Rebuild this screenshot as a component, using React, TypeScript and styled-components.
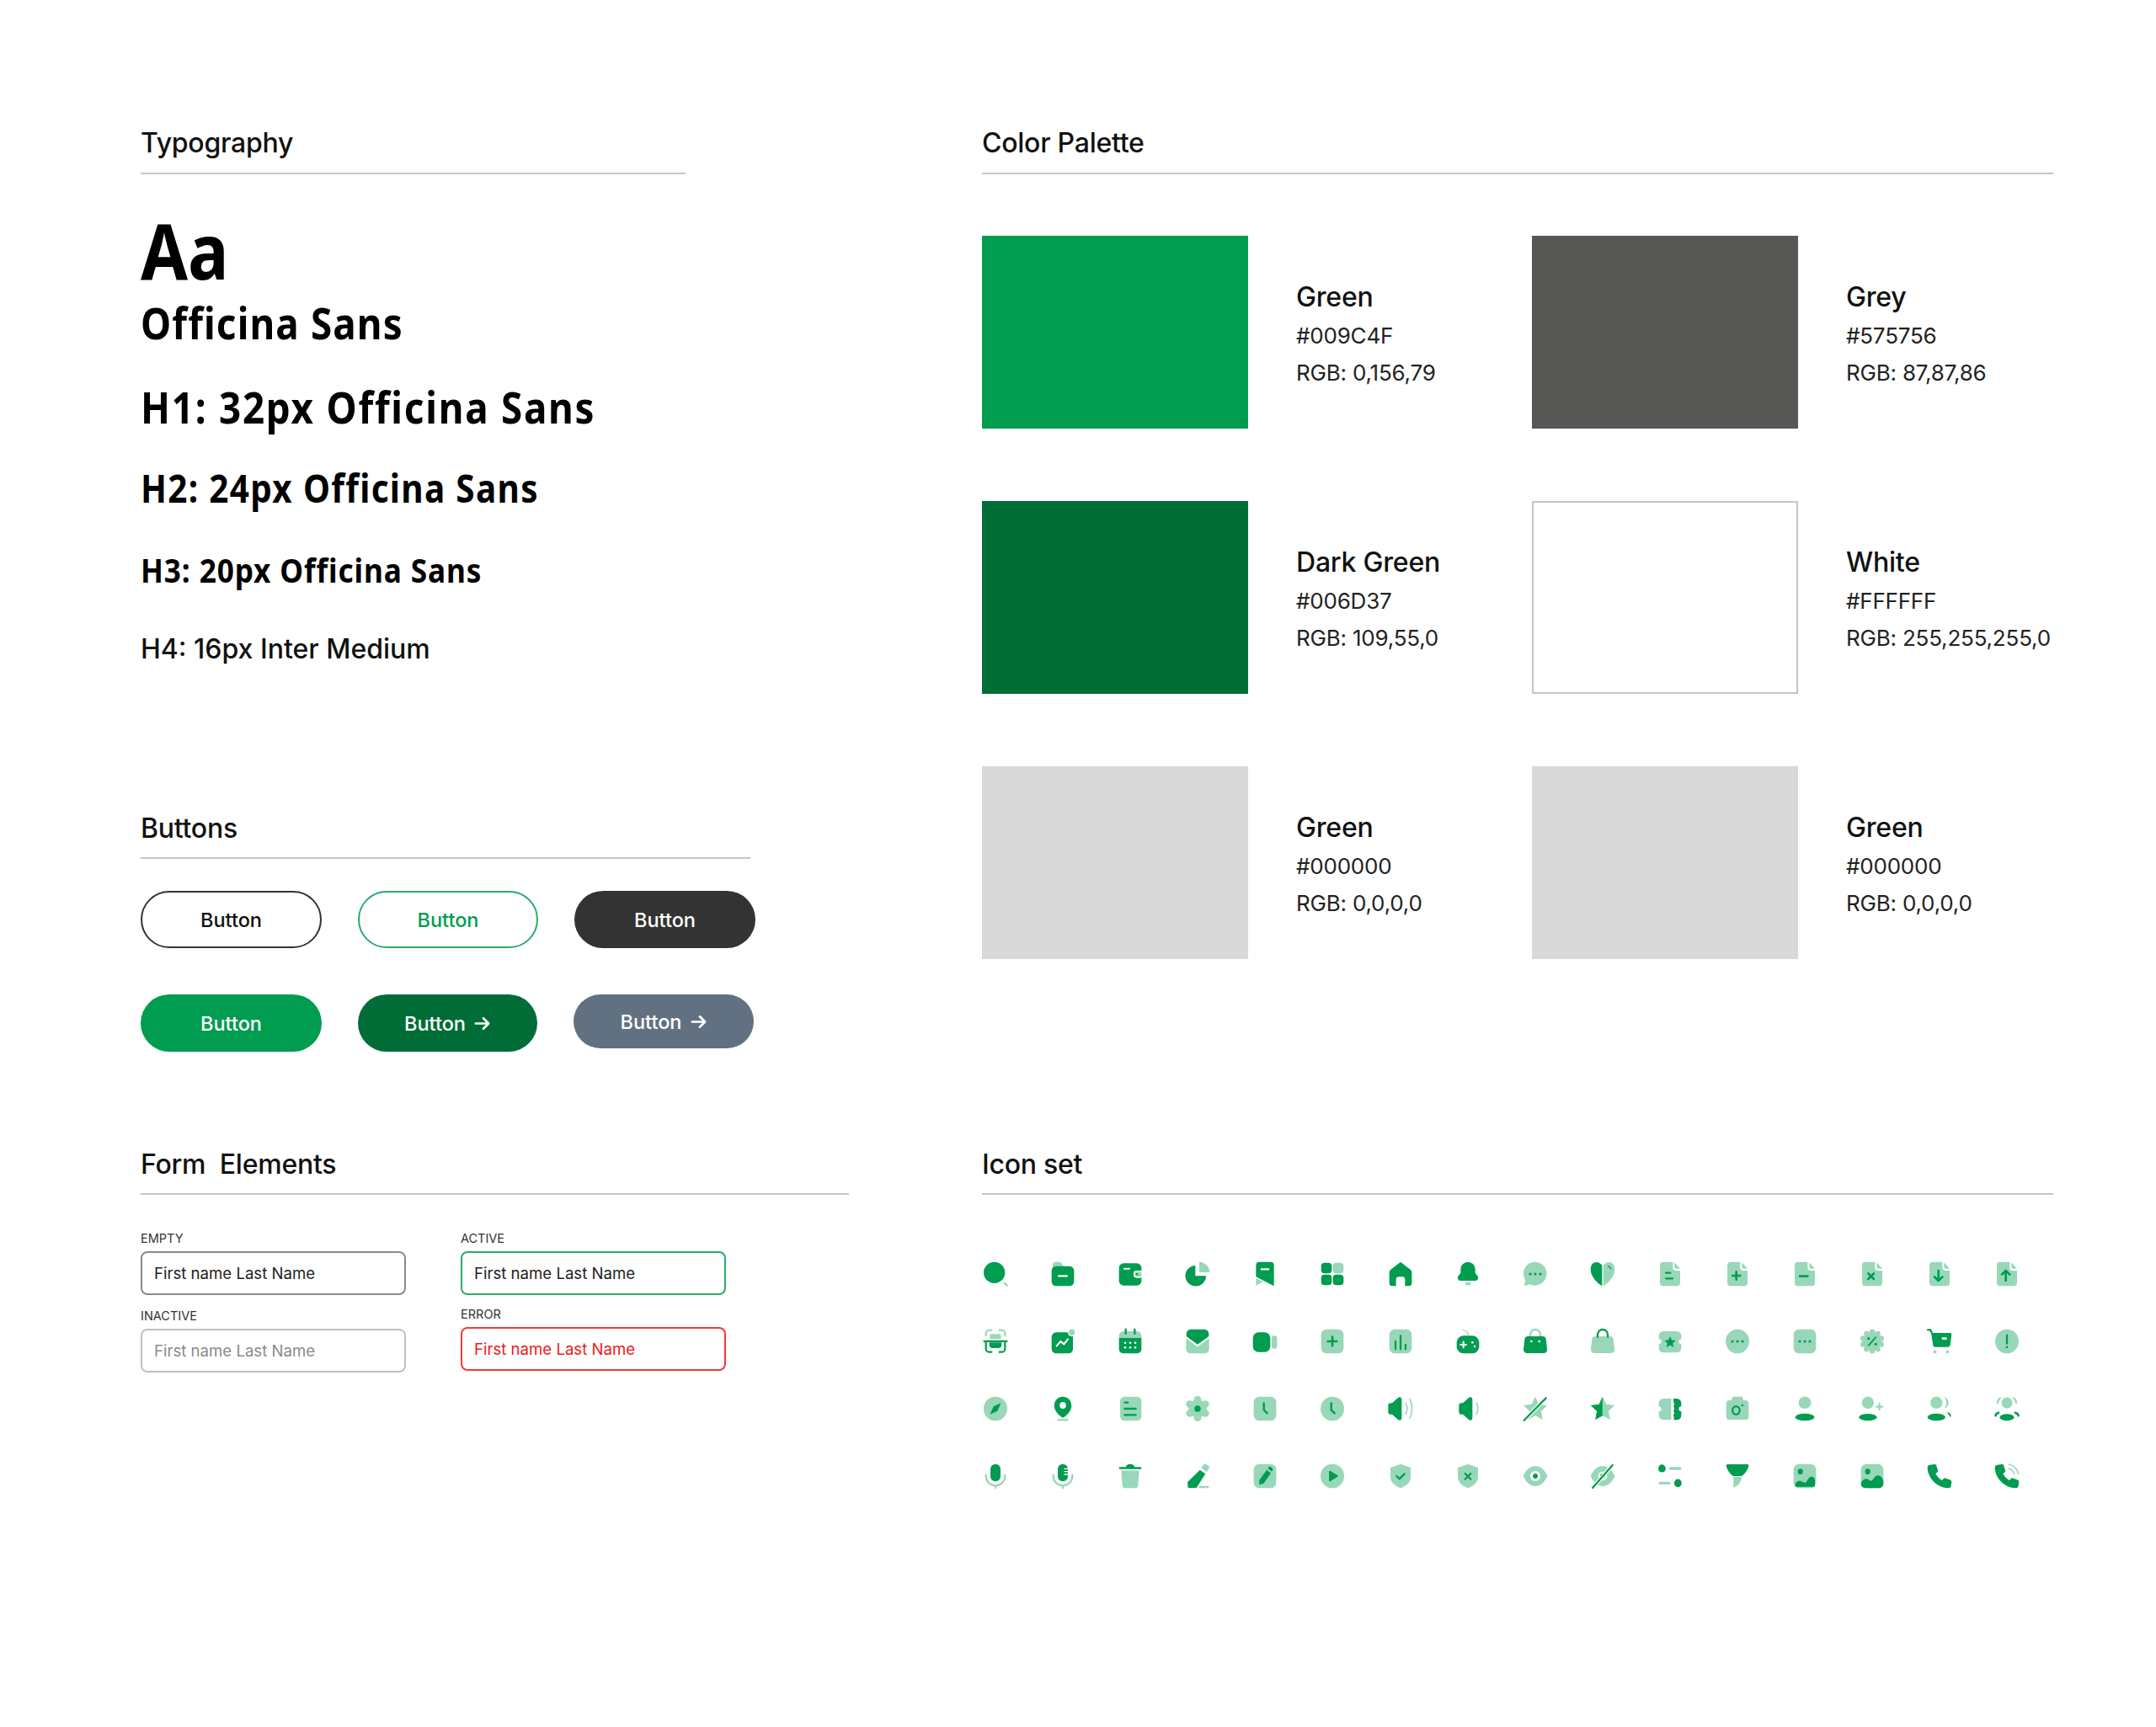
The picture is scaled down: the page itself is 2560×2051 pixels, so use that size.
import React from "react";
import styled, { createGlobalStyle } from "styled-components";

const GREEN = "#009C4F";

const Global = createGlobalStyle`
  html, body { margin: 0; padding: 0; background: #fff; }
  body { font-family: Inter, "Liberation Sans", sans-serif; color: #111; }
`;

const Page = styled.main`
  width: 2560px;
  min-height: 2051px;
  box-sizing: border-box;
  padding: 150px 122px 0 167px;
  display: grid;
  grid-template-columns: 999px 1272px;
  align-content: start;
  row-gap: 114px;
`;
const Column = styled.div`
  display: flex;
  flex-direction: column;
`;
const Section = styled.section<{ $width?: number; $top?: number }>`
  width: ${(p) => (p.$width ? `${p.$width}px` : "auto")};
  margin-top: ${(p) => p.$top ?? 0}px;
`;
const SectionTitle = styled.h2<{ $pad?: number }>`
  margin: 0;
  font-size: 32px;
  line-height: 40px;
  font-weight: 500;
  letter-spacing: -0.25px;
  color: #111;
  padding-bottom: ${(p) => p.$pad ?? 14}px;
  border-bottom: 2px solid #c6c6c6;
  white-space: pre;
`;

/* Typography */
const Specimen = styled.div<{ $size: number; $line: number; $top: number; $spacing: number }>`
  font-family: "Noto Sans", "Liberation Sans", sans-serif;
  font-weight: 700;
  font-size: ${(p) => p.$size}px;
  line-height: ${(p) => p.$line}px;
  letter-spacing: ${(p) => p.$spacing}px;
  margin-top: ${(p) => p.$top}px;
  color: #000;
  white-space: nowrap;
  transform: scaleX(0.88);
  transform-origin: left center;
`;
const InterLine = styled.div`
  font-size: 32px;
  line-height: 40px;
  font-weight: 500;
  margin-top: 54px;
  color: #111;
`;

/* Buttons */
const ButtonRows = styled.div`
  display: flex;
  flex-direction: column;
  gap: 55px;
  margin-top: 38px;
`;
const ButtonRow = styled.div`
  display: flex;
  align-items: flex-start;
  gap: 43px;
`;
const Pill = styled.button<{ $bg: string; $fg: string; $border?: string; $w?: number; $h?: number }>`
  flex: none;
  width: ${(p) => p.$w ?? 215}px;
  height: ${(p) => p.$h ?? 68}px;
  box-sizing: border-box;
  border-radius: 40px;
  background: ${(p) => p.$bg};
  color: ${(p) => p.$fg};
  border: ${(p) => (p.$border ? `2px solid ${p.$border}` : "none")};
  font-family: Inter, sans-serif;
  font-size: 23.5px;
  font-weight: 500;
  display: inline-flex;
  align-items: center;
  justify-content: center;
  gap: 9px;
  padding: 0;
`;

/* Form */
const FormGrid = styled.div`
  display: grid;
  grid-template-columns: 315px 315px;
  column-gap: 65px;
  margin-top: 42px;
`;
const FormColumn = styled.div<{ $gap: number }>`
  display: flex;
  flex-direction: column;
  gap: ${(p) => p.$gap}px;
`;
const FieldWrap = styled.label`
  display: flex;
  flex-direction: column;
  gap: 5px;
`;
const FieldLabel = styled.span`
  font-size: 14.5px;
  line-height: 20px;
  color: #333;
`;
const Field = styled.div<{ $border: string; $color: string }>`
  height: 52px;
  box-sizing: border-box;
  border: 2px solid ${(p) => p.$border};
  border-radius: 8px;
  padding: 0 14px;
  display: flex;
  align-items: center;
  font-size: 18.6px;
  color: ${(p) => p.$color};
`;

/* Palette */
const Palette = styled.div`
  display: grid;
  grid-template-columns: 653px 619px;
  row-gap: 86px;
  margin-top: 73px;
`;
const ColorCard = styled.div`
  display: flex;
  align-items: center;
  gap: 57px;
`;
const Swatch = styled.div<{ $bg: string; $outlined?: boolean }>`
  width: 316px;
  height: 229px;
  box-sizing: border-box;
  flex: none;
  background: ${(p) => p.$bg};
  border: ${(p) => (p.$outlined ? "2px solid #c6c6c6" : "none")};
`;
const ColorText = styled.div`
  display: flex;
  flex-direction: column;
  padding-top: 5px;
  white-space: nowrap;
  letter-spacing: -0.2px;
`;
const ColorName = styled.div`
  font-size: 32px;
  line-height: 48px;
  font-weight: 500;
  color: #111;
`;
const ColorValue = styled.div`
  font-size: 26px;
  line-height: 44px;
  color: #222;
`;

/* Icons */
const IconGrid = styled.div`
  display: grid;
  grid-template-columns: repeat(16, 32px);
  grid-auto-rows: 32px;
  column-gap: 48.1px;
  row-gap: 48px;
  margin-top: 78px;
`;
const IconSvg = styled.svg`
  width: 32px;
  height: 32px;
  display: block;
  .d { fill: ${GREEN}; }
  .l { fill: ${GREEN}; fill-opacity: 0.4; }
  .w { fill: #fff; }
  .ds { fill: none; stroke: ${GREEN}; stroke-width: 1.7; stroke-linecap: round; stroke-linejoin: round; }
  .ls { fill: none; stroke: ${GREEN}; stroke-opacity: 0.4; stroke-width: 1.7; stroke-linecap: round; stroke-linejoin: round; }
  .ws { fill: none; stroke: #fff; stroke-width: 1.6; stroke-linecap: round; stroke-linejoin: round; }
  .halo { fill: none; stroke: #fff; stroke-width: 3.4; stroke-linecap: round; }
`;

const FILE = "M6 1.25H14.5V6a3 3 0 0 0 3 3H21V19.75a3 3 0 0 1-3 3H6a3 3 0 0 1-3-3V4.25a3 3 0 0 1 3-3Z";
const FOLD = "M16 1.6L21 7.4H18a2 2 0 0 1-2-2Z";
const TICKET = "M6 3h12a4 4 0 0 1 4 4v3a2.2 2.2 0 0 0 0 4.4V18a4 4 0 0 1-4 4H6a4 4 0 0 1-4-4v-3.6A2.2 2.2 0 0 0 2 10V7a4 4 0 0 1 4-4Z";
const STAR = "M12 1.25l3.2 6.8 7.4 1-5.4 5.2 1.4 7.5-6.6-3.6-6.6 3.6 1.4-7.5-5.4-5.2 7.4-1Z";
const BAG = "M5.5 7.5h13a3 3 0 0 1 3 2.7l1 9a3 3 0 0 1-3 3.3H4.5a3 3 0 0 1-3-3.3l1-9a3 3 0 0 1 3-2.7Z";
const SHIELD = "M12 1.25L21 4.5V13c0 4.5-4 8-9 9.75C7 21 3 17.5 3 13V4.5Z";
const EYE = "M12 3C17 3 20.5 7 22.75 12C20.5 17 17 21 12 21C7 21 3.5 17 1.25 12C3.5 7 7 3 12 3Z";
const PHONE = "M3.5 2L7.5 1.5a1.5 1.5 0 0 1 1.6 1L10.5 7a1.5 1.5 0 0 1-.5 1.6L8.5 10C9.8 12.5 11.8 14.5 14.2 15.8L15.7 14.2a1.5 1.5 0 0 1 1.6-.4L21.8 15.5a1.5 1.5 0 0 1 .9 1.5L22.3 20.5a2.5 2.5 0 0 1-2.5 2.2C10 22.5 1.5 14 1.25 4.5A2.5 2.5 0 0 1 3.5 2Z";
const SPEAKER = "M10 2c2-1 3 .5 3 2V20c0 1.5-1 3-3 2L4.5 17H3a2 2 0 0 1-2-2V9a2 2 0 0 1 2-2h1.5Z";

const Bumps = ({ n, r, b, c }: { n: number; r: number; b: number; c: string }) => (
  <>
    {Array.from({ length: n }, (_, i) => {
      const a = (i * 2 * Math.PI) / n;
      return <circle key={i} className={c} cx={12 + r * Math.sin(a)} cy={12 - r * Math.cos(a)} r={b} />;
    })}
  </>
);
const Dots = () => (
  <>
    <circle className="d" cx="7.5" cy="12" r="1.2" />
    <circle className="d" cx="12" cy="12" r="1.2" />
    <circle className="d" cx="16.5" cy="12" r="1.2" />
  </>
);
const FileIcon = ({ children }: { children: React.ReactNode }) => (
  <>
    <path className="l" d={FILE} />
    <path className="l" d={FOLD} />
    {children}
  </>
);
const SquareL = () => <rect className="l" x="2" y="1.25" width="20" height="21.5" rx="5" />;
const CircleL = () => <ellipse className="l" cx="12" cy="12" rx="10.5" ry="10.75" />;

const ICONS: React.ReactNode[] = [
  /* row 1 */
  <><circle className="d" cx="11" cy="10.8" r="9.5" /><path className="ls" d="M20 20l2.2 2.2" /></>,
  <><path className="l" d="M3 8V4a2.7 2.7 0 0 1 2.7-2.7h3c1 0 1.7.5 2.2 1.3L13 6Z" /><rect className="d" x="2" y="5" width="20" height="17.75" rx="4" /><rect className="w" x="7.5" y="13" width="9" height="1.7" rx=".8" /></>,
  <><rect className="d" x="2" y="2.5" width="20" height="19.75" rx="4" /><rect className="w" x="6" y="6.5" width="6" height="1.6" rx=".8" /><rect className="w" x="15" y="9" width="8" height="6.5" rx="2.5" /><rect className="l" x="16" y="10" width="6" height="4.5" rx="1.8" /><circle className="d" cx="18" cy="12.2" r="1" /></>,
  <><path className="d" d="M10 4.5V13.75H19.5A9.2 9.2 0 1 1 10 4.5Z" /><path className="l" d="M13.5 1.25A9.5 9.5 0 0 1 22.75 10.5H13.5Z" /></>,
  <><path className="d" d="M7 1.25h10a3 3 0 0 1 3 3V22.75L4 14.5V4.25a3 3 0 0 1 3-3Z" /><path className="l" d="M4 15.7L10.5 18.8L4 22.5Z" /><rect className="w" x="8" y="7" width="8" height="1.6" rx=".8" /></>,
  <><rect className="d" x="2" y="2" width="9.5" height="9.5" rx="3" /><rect className="l" x="12.5" y="2" width="9.5" height="9.5" rx="3" /><rect className="d" x="2" y="12.5" width="9.5" height="9.5" rx="3" /><rect className="d" x="12.5" y="12.5" width="9.5" height="9.5" rx="3" /></>,
  <path className="d" d="M12 1.25L20.7 8a3.5 3.5 0 0 1 1.3 2.7V20a2.7 2.7 0 0 1-2.7 2.7H16V17a2.5 2.5 0 0 0-2.5-2.5h-3A2.5 2.5 0 0 0 8 17v5.7H4.7A2.7 2.7 0 0 1 2 20V10.7A3.5 3.5 0 0 1 3.3 8Z" />,
  <><path className="d" d="M12 1.25a6.5 6.5 0 0 1 6.5 6.5v3.5l2 2.5a2.5 2.5 0 0 1-2 4.2H5.5a2.5 2.5 0 0 1-2-4.2l2-2.5V7.75a6.5 6.5 0 0 1 6.5-6.5Z" /><path className="l" d="M9.3 19.5h5.4a2.7 2.7 0 0 1-5.4 0Z" /></>,
  <><path className="l" d="M12 1.25A10.5 10.5 0 1 1 7 21.2L2 22.75L3.3 17.7A10.5 10.5 0 0 1 12 1.25Z" /><Dots /></>,
  <><path className="d" d="M11.5 4.5C10 2.5 8.5 1.5 6.5 1.5C3.5 1.5 1.25 4 1.25 8C1.25 14 7 20 11.5 22.75Z" /><path className="l" d="M12.5 4.5C14 2.5 15.5 1.5 17.5 1.5C20.5 1.5 22.75 4 22.75 8C22.75 14 17 20 12.5 22.75Z" /><path className="ds" style={{ strokeWidth: 1 }} d="M17 5c1.2.3 2 1.2 2.2 2.4" /></>,
  <FileIcon><path className="ds" d="M8.2 11h4M8.2 16h6" /></FileIcon>,
  <FileIcon><path className="ds" style={{ strokeWidth: 2 }} d="M11 10v7M7.5 13.5h7" /></FileIcon>,
  <FileIcon><path className="ds" style={{ strokeWidth: 2 }} d="M7.5 14h7" /></FileIcon>,
  <FileIcon><path className="ds" style={{ strokeWidth: 2 }} d="M8.5 11.5l5 5M13.5 11.5l-5 5" /></FileIcon>,
  <FileIcon><path className="ds" style={{ strokeWidth: 2 }} d="M11 9v9M7.5 14.5l3.5 3.5 3.5-3.5" /></FileIcon>,
  <FileIcon><path className="ds" style={{ strokeWidth: 2 }} d="M11 18V9M7.5 12.5L11 9l3.5 3.5" /></FileIcon>,
  /* row 2 */
  <><path className="ls" d="M3.5 7V5a3 3 0 0 1 3-3h2M15.5 2h2a3 3 0 0 1 3 3v2" /><rect className="l" x="7" y="5.5" width="10" height="4.5" rx="1.5" /><rect className="d" x="1.25" y="11" width="21.5" height="1.8" rx=".5" /><path className="d" d="M6.5 13h11v2a3 3 0 0 1-3 3h-5a3 3 0 0 1-3-3Z" /><path className="ds" d="M3.5 13v5.5a3 3 0 0 0 3 3h2M20.5 13v5.5a3 3 0 0 1-3 3h-2" /></>,
  <><rect className="d" x="2" y="4" width="19" height="18.75" rx="4" /><path className="ws" d="M6.5 16l3.5-4 3 2.5 3.5-4.5" /><circle className="w" cx="20" cy="4" r="3.6" /><circle className="l" cx="20" cy="4" r="2.7" /></>,
  <><path className="ds" d="M8 1.25v4M16 1.25v4" /><path className="l" d="M6 3h12a4 4 0 0 1 4 4v2H2V7a4 4 0 0 1 4-4Z" /><path className="d" d="M2 9h20v10a3.7 3.7 0 0 1-3.7 3.7H5.7A3.7 3.7 0 0 1 2 19Z" />{[7.5, 12, 16.5].map((x) => <React.Fragment key={x}><circle className="w" cx={x} cy="13.3" r="1" /><circle className="w" cx={x} cy="17.5" r="1" /></React.Fragment>)}</>,
  <><rect className="l" x="1.75" y="7" width="20.5" height="15.75" rx="4" /><path className="ws" style={{ strokeWidth: 1.4 }} d="M1.75 8.5L12 16L22.25 8.5" /><path className="d" d="M6 1.25h12a4 4 0 0 1 4 4V7.5L12 14.6L2 7.5V5.25a4 4 0 0 1 4-4Z" /></>,
  <><rect className="d" x="1.25" y="4" width="15.5" height="17.5" rx="5" /><rect className="l" x="18" y="7" width="4.75" height="11.5" rx="1.8" /></>,
  <><SquareL /><path className="ds" style={{ strokeWidth: 2 }} d="M12 8v8M8 12h8" /></>,
  <><SquareL /><path className="ds" d="M7.5 12v7M12 7v12M16.5 15v4" /></>,
  <><path className="ls" style={{ strokeWidth: 1 }} d="M7.5 1.5c1 1.5 4 1 4.5 3 .2 1 0 2 0 2" /><rect className="d" x="2" y="7" width="20" height="15.75" rx="6" /><path className="ws" d="M8 12.5v5M5.5 15h5" /><circle className="w" cx="16" cy="13" r="1" /><circle className="w" cx="18" cy="16.5" r="1" /></>,
  <><path className="ls" d="M7.5 8V6a4.5 4.5 0 0 1 9 0v2" /><path className="d" d={BAG} /><circle className="w" cx="8.5" cy="12" r="1" /><circle className="w" cx="15.5" cy="12" r="1" /></>,
  <><path className="ds" d="M7.5 8V6a4.5 4.5 0 0 1 9 0v2" /><path className="l" d={BAG} /></>,
  <><path className="l" d={TICKET} /><path className="d" d="M12 7.5l1.5 3.3 3.6.4-2.7 2.4.8 3.6-3.2-1.8-3.2 1.8.8-3.6-2.7-2.4 3.6-.4Z" /></>,
  <><CircleL /><Dots /></>,
  <><SquareL /><Dots /></>,
  <><Bumps n={10} r={8.5} b={2.4} c="l" /><circle className="w" cx="12" cy="12" r="8.4" /><circle className="l" cx="12" cy="12" r="8.4" /><path className="ds" style={{ strokeWidth: 1.4 }} d="M15 8.5l-6 7" /><circle className="d" cx="8.8" cy="9.5" r="1.2" /><circle className="d" cx="15.2" cy="14.5" r="1.2" /></>,
  <><path className="ds" d="M1.5 1.75h2.2L5 4" /><path className="d" d="M5 4.5h16.2a1.5 1.5 0 0 1 1.5 1.7l-1.2 9a2 2 0 0 1-2 1.8H8.2a2 2 0 0 1-2-1.7L4.5 4.5Z" /><rect className="w" x="14" y="8.5" width="4.5" height="2" rx=".5" /><circle className="l" cx="8" cy="21.3" r="1.4" /><circle className="l" cx="19" cy="21.3" r="1.4" /></>,
  <><CircleL /><path className="ds" d="M12 6.5v7.5" /><circle className="d" cx="12" cy="17.2" r="1" /></>,
  /* row 3 */
  <><CircleL /><path className="d" d="M16.8 7L13.8 14L7.2 17L10.2 10Z" /></>,
  <><path className="d" d="M12 1.25a7.7 7.7 0 0 1 7.7 7.9c0 4.5-3.5 8.3-7.7 11-4.2-2.7-7.7-6.5-7.7-11A7.7 7.7 0 0 1 12 1.25Z" /><ellipse className="w" cx="12" cy="9" rx="2.8" ry="3" /><rect className="l" x="7" y="21.2" width="10" height="1.6" rx=".8" /></>,
  <><rect className="l" x="3" y="1.25" width="19" height="21.5" rx="4" /><path className="ds" d="M7 6.5h3M7 12h10M7 17.5h10" /></>,
  <><Bumps n={6} r={8} b={3.3} c="l" /><circle className="w" cx="12" cy="12" r="8" /><circle className="l" cx="12" cy="12" r="8" /><circle className="d" cx="12" cy="12" r="2.8" /></>,
  <><SquareL /><path className="ds" style={{ strokeWidth: 1.8 }} d="M11 7v6l3 3" /></>,
  <><CircleL /><path className="ds" style={{ strokeWidth: 1.8 }} d="M11 7v6l3 3" /></>,
  <><path className="d" d={SPEAKER} /><path className="ls" style={{ strokeWidth: 1.2 }} d="M16.5 7c1.7 3 1.7 7 0 10M20 3.5c3 5 3 12 0 17" /></>,
  <g transform="translate(3 0)"><path className="d" d={SPEAKER} /><path className="ls" style={{ strokeWidth: 1.2 }} d="M16.5 7c1.7 3 1.7 7 0 10" /></g>,
  <><path className="l" d={STAR} /><path className="halo" d="M2 22.3L22 2" /><path className="ds" d="M2 22.3L21.5 2.5" /></>,
  <><path className="l" d={STAR} /><path className="d" d="M11.8 1.25V18.3L5.4 21.75l1.4-7.5-5.4-5.2 7.4-1Z" /></>,
  <><path className="l" d="M6 3h7V22H6a4 4 0 0 1-4-4v-3.6A2.2 2.2 0 0 0 2 10V7a4 4 0 0 1 4-4Z" /><path className="d" d="M15 3h3a4 4 0 0 1 4 4v3a2.2 2.2 0 0 0 0 4.4V18a4 4 0 0 1-4 4h-3c.8-1.5.8-3-.2-4.2 1.2-1.5 1.2-2.6.2-3.8 1-1.4 1-2.6 0-4 1-1.3 1-2.8 0-4Z" /></>,
  <><path className="l" d="M8 1.25h8l1.5 3.2H19a3 3 0 0 1 3 3V19a3 3 0 0 1-3 3H5a3 3 0 0 1-3-3V7.45a3 3 0 0 1 3-3h1.5Z" /><ellipse cx="10.8" cy="13.5" rx="3.2" ry="3.6" className="ds" /><circle className="d" cx="16.5" cy="9" r="1" /></>,
  <><ellipse className="l" cx="12" cy="6.6" rx="5.6" ry="5.4" /><ellipse className="d" cx="12" cy="19.5" rx="8.6" ry="3.25" /></>,
  <><ellipse className="l" cx="8.2" cy="6.6" rx="5.4" ry="5.4" /><ellipse className="d" cx="8.2" cy="19.6" rx="8" ry="3.1" /><path className="ls" d="M18.5 7.5v5.4M15.8 10.2h5.4" /></>,
  <><ellipse className="l" cx="9.2" cy="6.6" rx="5.4" ry="5.4" /><path className="l" d="M16 1.5c2.5.7 4 2.7 4 5.2s-1.5 4.5-4 5.2c1.3-1.4 2-3.2 2-5.2s-.7-3.8-2-5.2Z" /><ellipse className="d" cx="9.2" cy="19.5" rx="8" ry="3.2" /><path className="d" d="M18 15c2.3.3 4.2 1.4 4.2 3 0 .6-.3 1.2-.8 1.7-.5-2-1.7-3.5-3.4-4.7Z" /></>,
  <><ellipse className="l" cx="12" cy="6.8" rx="4.8" ry="5" /><path className="ls" style={{ strokeWidth: 1.5 }} d="M6 2.5c-1.5 1-2.3 2.5-2.3 4.3M18 2.5c1.5 1 2.3 2.5 2.3 4.3" /><ellipse className="d" cx="12" cy="19.7" rx="6.4" ry="3" /><path className="ds" style={{ strokeWidth: 2 }} d="M4.5 15.5c-1.5.6-2.6 1.5-2.6 2.7M19.5 15.5c1.5.6 2.6 1.5 2.6 2.7" /></>,
  /* row 4 */
  <><rect className="d" x="7.5" y="1.25" width="9" height="15.5" rx="4.5" /><path className="ls" d="M3.5 11v1a8.5 8.5 0 0 0 17 0v-1M12 20.5v2.25" /></>,
  <><rect className="d" x="7.5" y="1.25" width="9" height="15.5" rx="4.5" /><path className="ws" style={{ strokeWidth: 1 }} d="M13.5 5.5h3M13.5 8h3M13.5 10.5h3" /><path className="ls" d="M3.5 11v1a8.5 8.5 0 0 0 17 0v-1M12 20.5v2.25" /></>,
  <><path className="d" d="M8 4.5c0-2 1.5-3.25 4-3.25s4 1.25 4 3.25Z" /><rect className="d" x="2" y="4" width="20" height="1.9" rx=".8" /><path className="l" d="M4 7h16l-1 13a3 3 0 0 1-3 2.75H8A3 3 0 0 1 5 20Z" /></>,
  <><path className="d" d="M14 6.5l5 3.5-8 12.5H3.5L3 17.5Z" /><path className="l" d="M15.2 4.8l2-2.8a2 2 0 0 1 2.8-.4l1.6 1.2a2 2 0 0 1 .4 2.8l-2 2.8Z" /><rect className="l" x="13.5" y="20.8" width="8.5" height="1.8" rx=".5" /></>,
  <><SquareL /><path className="d" d="M13.5 6.5l3.8 2.8-6.5 9.2-4 1.2.2-4.2Z" /><path className="d" d="M14.5 5.2l.8-1a1.5 1.5 0 0 1 2-.3l1.2.9a1.5 1.5 0 0 1 .3 2l-.8 1Z" /></>,
  <><CircleL /><path className="d" d="M9 8.3a1 1 0 0 1 1.5-.8l6 3.7a.9.9 0 0 1 0 1.6l-6 3.7a1 1 0 0 1-1.5-.8Z" /></>,
  <><path className="l" d={SHIELD} /><path className="ds" d="M8.5 12l2.5 2.5 4.5-4.5" /></>,
  <><path className="l" d={SHIELD} /><path className="ds" d="M9.5 9.8l5 5M14.5 9.8l-5 5" /></>,
  <><path className="l" d={EYE} /><circle className="w" cx="12" cy="12" r="4.5" /><circle className="d" cx="12" cy="12" r="2.2" /></>,
  <><path className="l" d={EYE} /><circle className="w" cx="12" cy="12" r="4" /><circle className="d" cx="12" cy="12" r="2.2" /><path className="halo" d="M3 22.5L21 2" /><path className="ds" d="M3 22.5L20.8 2.3" /></>,
  <><ellipse className="d" cx="4.8" cy="5.2" rx="3.3" ry="3.5" /><rect className="l" x="11" y="4" width="11" height="2.5" rx="1.2" /><rect className="l" x="2" y="17" width="10.5" height="2.5" rx="1.2" /><ellipse className="d" cx="19" cy="18.3" rx="3.3" ry="3.6" /></>,
  <><path className="d" d="M3.2 1.5h17.6a1.2 1.2 0 0 1 1.2 1.5c-.8 3.2-3 6.8-6 9H8c-3-2.2-5.2-5.8-6-9a1.2 1.2 0 0 1 1.2-1.5Z" /><path className="l" d="M8.5 12.8h7v3.2l-1.5 1v2L8.5 22.5Z" /></>,
  <><SquareL /><ellipse className="d" cx="8" cy="8" rx="2.3" ry="2.5" /><path className="d" d="M3.5 20c0-2 1.8-3.7 3.8-3.7 2 0 3.2 1.5 4.7 1.5 2.5 0 2.5-5.3 6-5.3 1.9 0 3 1.5 3 3.5v4.5a1 1 0 0 1-1 1H4.5a1 1 0 0 1-1-1Z" /></>,
  <><SquareL /><ellipse className="d" cx="8" cy="8" rx="2.3" ry="2.5" /><path className="d" d="M2 18.5c.5-1.8 2.5-4 4.5-4 2 0 3 1.8 4.5 1.8 2 0 2.8-4.8 6-4.8 2.5 0 4.5 2.5 5 5v2.5a3.7 3.7 0 0 1-3.7 3.7H5.7A3.7 3.7 0 0 1 2 19Z" /></>,
  <path className="d" d={PHONE} />,
  <><path className="d" d={PHONE} /><path className="ls" style={{ strokeWidth: 1.2 }} d="M13.5 1.5c4 .5 8 4 8.5 8.5M13.5 5.5c2.5.3 4.5 2.3 4.8 4.8" /></>,
];

const Arrow = () => (
  <svg width="21" height="21" viewBox="0 0 22 22" fill="none" stroke="currentColor" strokeWidth="2.8" strokeLinecap="round" strokeLinejoin="round">
    <path d="M3 11h16M12.5 4.5L19 11l-6.5 6.5" />
  </svg>
);

const COLORS = [
  { name: "Green", hex: "#009C4F", rgb: "RGB: 0,156,79", bg: "#009C4F" },
  { name: "Grey", hex: "#575756", rgb: "RGB: 87,87,86", bg: "#575756" },
  { name: "Dark Green", hex: "#006D37", rgb: "RGB: 109,55,0", bg: "#006D37" },
  { name: "White", hex: "#FFFFFF", rgb: "RGB: 255,255,255,0", bg: "#FFFFFF", outlined: true },
  { name: "Green", hex: "#000000", rgb: "RGB: 0,0,0,0", bg: "#D9D9D9" },
  { name: "Green", hex: "#000000", rgb: "RGB: 0,0,0,0", bg: "#D9D9D9" },
];

const FormField = ({ label, border, color }: { label: string; border: string; color: string }) => (
  <FieldWrap>
    <FieldLabel>{label}</FieldLabel>
    <Field $border={border} $color={color}>First name Last Name</Field>
  </FieldWrap>
);

export default function App() {
  return (
    <>
      <Global />
      <Page>
        <Column>
          <Section $width={647}>
            <SectionTitle $pad={15}>Typography</SectionTitle>
            <Specimen $size={92} $line={100} $top={40} $spacing={0}>Aa</Specimen>
            <Specimen $size={52} $line={66} $top={3} $spacing={1.3}>Officina Sans</Specimen>
            <Specimen $size={52} $line={60} $top={37} $spacing={2}>H1: 32px Officina Sans</Specimen>
            <Specimen $size={46} $line={50} $top={41} $spacing={1.5}>H2: 24px Officina Sans</Specimen>
            <Specimen $size={40} $line={40} $top={53} $spacing={1}>H3: 20px Officina Sans</Specimen>
            <InterLine>H4: 16px Inter Medium</InterLine>
          </Section>
          <Section $width={724} $top={173}>
            <SectionTitle>Buttons</SectionTitle>
            <ButtonRows>
              <ButtonRow>
                <Pill $bg="#fff" $fg="#111" $border="#333">Button</Pill>
                <Pill $bg="#fff" $fg={GREEN} $border="#2BAA6C" $w={214}>Button</Pill>
                <Pill $bg="#333" $fg="#fff">Button</Pill>
              </ButtonRow>
              <ButtonRow>
                <Pill $bg={GREEN} $fg="#fff">Button</Pill>
                <Pill $bg="#006D37" $fg="#fff" $w={213}>Button <Arrow /></Pill>
                <Pill $bg="#627182" $fg="#fff" $h={64} $w={214}>Button <Arrow /></Pill>
              </ButtonRow>
            </ButtonRows>
          </Section>
        </Column>
        <Column>
          <Section>
            <SectionTitle $pad={15}>Color Palette</SectionTitle>
            <Palette>
              {COLORS.map((c, i) => (
                <ColorCard key={i}>
                  <Swatch $bg={c.bg} $outlined={c.outlined} />
                  <ColorText>
                    <ColorName>{c.name}</ColorName>
                    <ColorValue>{c.hex}</ColorValue>
                    <ColorValue>{c.rgb}</ColorValue>
                  </ColorText>
                </ColorCard>
              ))}
            </Palette>
          </Section>
        </Column>
        <Column>
          <Section $width={841}>
            <SectionTitle>{"Form  Elements"}</SectionTitle>
            <FormGrid>
              <FormColumn $gap={15}>
                <FormField label="EMPTY" border="#8a8a8a" color="#222" />
                <FormField label="INACTIVE" border="#c0c0c0" color="#8a8a8a" />
              </FormColumn>
              <FormColumn $gap={13}>
                <FormField label="ACTIVE" border="#2BAA6C" color="#222" />
                <FormField label="ERROR" border="#F03A3A" color="#F01818" />
              </FormColumn>
            </FormGrid>
          </Section>
        </Column>
        <Column>
          <Section>
            <SectionTitle>Icon set</SectionTitle>
            <IconGrid>
              {ICONS.map((ic, i) => (
                <IconSvg key={i} viewBox="0 0 24 24">{ic}</IconSvg>
              ))}
            </IconGrid>
          </Section>
        </Column>
      </Page>
    </>
  );
}
